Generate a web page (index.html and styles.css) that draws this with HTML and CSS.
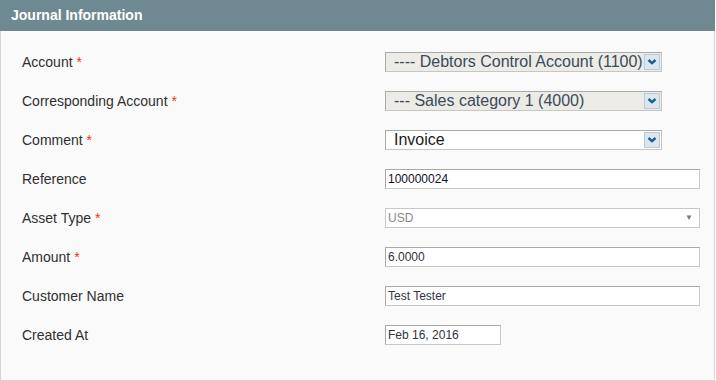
FILE: index.html
```html
<!DOCTYPE html>
<html>
<head>
<meta charset="utf-8">
<link rel="stylesheet" href="styles.css">
</head>
<body>
<div class="panel">
  <div class="panel-head">Journal Information</div>
  <div class="panel-body">
    <div class="row">
      <div class="label">Account <span class="req">*</span></div>
      <div class="sel sel-grey"><span class="sel-text">---- Debtors Control Account (1100)</span><span class="sel-btn"><svg width="10" height="6" viewBox="0 0 10 6"><path d="M1.5 1 L5 4.2 L8.5 1" fill="none" stroke="#1b5e94" stroke-width="2.4"/></svg></span></div>
    </div>
    <div class="row">
      <div class="label">Corresponding Account <span class="req">*</span></div>
      <div class="sel sel-grey"><span class="sel-text">--- Sales category 1 (4000)</span><span class="sel-btn"><svg width="10" height="6" viewBox="0 0 10 6"><path d="M1.5 1 L5 4.2 L8.5 1" fill="none" stroke="#1b5e94" stroke-width="2.4"/></svg></span></div>
    </div>
    <div class="row">
      <div class="label">Comment <span class="req">*</span></div>
      <div class="sel sel-white"><span class="sel-text">Invoice</span><span class="sel-btn"><svg width="10" height="6" viewBox="0 0 10 6"><path d="M1.5 1 L5 4.2 L8.5 1" fill="none" stroke="#1b5e94" stroke-width="2.4"/></svg></span></div>
    </div>
    <div class="row">
      <div class="label">Reference</div>
      <div class="inp inp-dark">100000024</div>
    </div>
    <div class="row">
      <div class="label">Asset Type <span class="req">*</span></div>
      <div class="inp inp-select"><span class="muted">USD</span><span class="tri">&#9660;</span></div>
    </div>
    <div class="row">
      <div class="label">Amount <span class="req">*</span></div>
      <div class="inp">6.0000</div>
    </div>
    <div class="row">
      <div class="label">Customer Name</div>
      <div class="inp">Test Tester</div>
    </div>
    <div class="row">
      <div class="label">Created At</div>
      <div class="inp inp-short">Feb 16, 2016</div>
    </div>
  </div>
</div>
</body>
</html>
```

FILE: styles.css
```css
html, body {
  margin: 0;
  padding: 0;
  background: #ffffff;
}
body {
  font-family: "Liberation Sans", Arial, sans-serif;
  width: 716px;
  height: 381px;
  overflow: hidden;
}
.panel {
  width: 715px;
  height: 381px;
  box-sizing: border-box;
}
.panel-head {
  height: 31px;
  box-sizing: border-box;
  background: #6f8992;
  color: #ffffff;
  font-weight: bold;
  font-size: 14px;
  line-height: 31px;
  padding-left: 11px;
}
.panel-body {
  height: 350px;
  box-sizing: border-box;
  background: #fafafa;
  border-left: 1px solid #d6d6d6;
  border-right: 1px solid #d6d6d6;
  border-bottom: 1px solid #d6d6d6;
  padding: 11px 0 0 21px;
}
.row {
  height: 39px;
  display: flex;
  align-items: center;
}
.label {
  width: 363px;
  font-size: 14px;
  color: #303030;
}
.req {
  color: #eb340a;
}
.sel {
  width: 277px;
  height: 20px;
  box-sizing: border-box;
  border: 1px solid #aaaaaa;
  border-right-color: #c6c6c6;
  border-bottom-color: #c6c6c6;
  display: flex;
  align-items: center;
  justify-content: space-between;
  font-size: 16px;
  color: #3a4a5c;
  padding-left: 8px;
  padding-right: 1px;
  overflow: hidden;
}
.sel-grey {
  background: #ecebe5;
}
.sel-white {
  background: #ffffff;
  color: #1a1a1a;
}
.sel-text {
  white-space: nowrap;
  line-height: 18px;
}
.sel-btn {
  flex: none;
  width: 16px;
  height: 16px;
  box-sizing: border-box;
  background: #dbe6ee;
  border: 1px solid #b9cbd8;
  display: flex;
  align-items: center;
  justify-content: center;
}
.inp {
  width: 315px;
  height: 20px;
  box-sizing: border-box;
  background: #ffffff;
  border: 1px solid #a9a9a9;
  border-right-color: #c8c8c8;
  border-bottom-color: #c8c8c8;
  font-size: 12px;
  line-height: 18px;
  color: #2f3440;
  padding-left: 2px;
}
.inp-dark {
  color: #0f0f1f;
}
.inp-select {
  display: flex;
  justify-content: space-between;
  align-items: center;
  border-color: #c8c8c8;
  padding-right: 6px;
}
.muted {
  color: #8a8a8a;
}
.tri {
  color: #7a7a7a;
  font-size: 8px;
}
.inp-short {
  width: 116px;
}
```
